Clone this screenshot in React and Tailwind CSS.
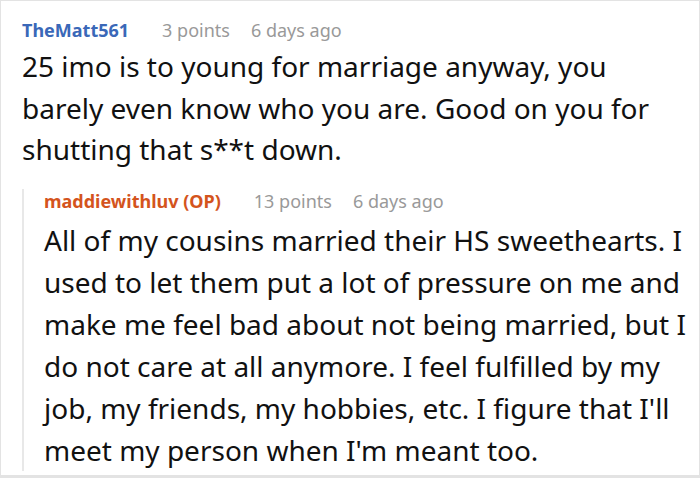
const comment = {
  author: "TheMatt561",
  points: "3 points",
  time: "6 days ago",
  body: "25 imo is to young for marriage anyway, you barely even know who you are. Good on you for shutting that s**t down.",
};

const reply = {
  author: "maddiewithluv (OP)",
  points: "13 points",
  time: "6 days ago",
  body: "All of my cousins married their HS sweethearts. I used to let them put a lot of pressure on me and make me feel bad about not being married, but I do not care at all anymore. I feel fulfilled by my job, my friends, my hobbies, etc. I figure that I'll meet my person when I'm meant too.",
};

function Meta({ item, nameColor }) {
  return (
    <div className="flex items-baseline text-[18px] leading-[24px]">
      <span className={`font-bold ${nameColor}`}>{item.author}</span>
      <span className="ml-[33px] text-[#999999]">{item.points}</span>
      <span className="ml-[21px] text-[#999999]">{item.time}</span>
    </div>
  );
}

export default function App() {
  return (
    <div className="w-[700px] h-[478px] bg-white border border-[#e3e3e3] border-b-[3px] font-['Noto_Sans',sans-serif] text-[#111111] overflow-hidden">
      <div className="pl-[21px] pr-[6px] pt-[17px]">
        <Meta item={comment} nameColor="text-[#3a68b8]" />
        <p className="mt-[4px] text-[28px] leading-[41.5px] pr-4">{comment.body}</p>

        <div className="mt-[18px] border-l-2 border-[#e8e8e8] pl-[20px]">
          <Meta item={reply} nameColor="text-[#d4541d]" />
          <p className="mt-[6px] text-[28px] leading-[42px]">{reply.body}</p>
        </div>
      </div>
    </div>
  );
}
